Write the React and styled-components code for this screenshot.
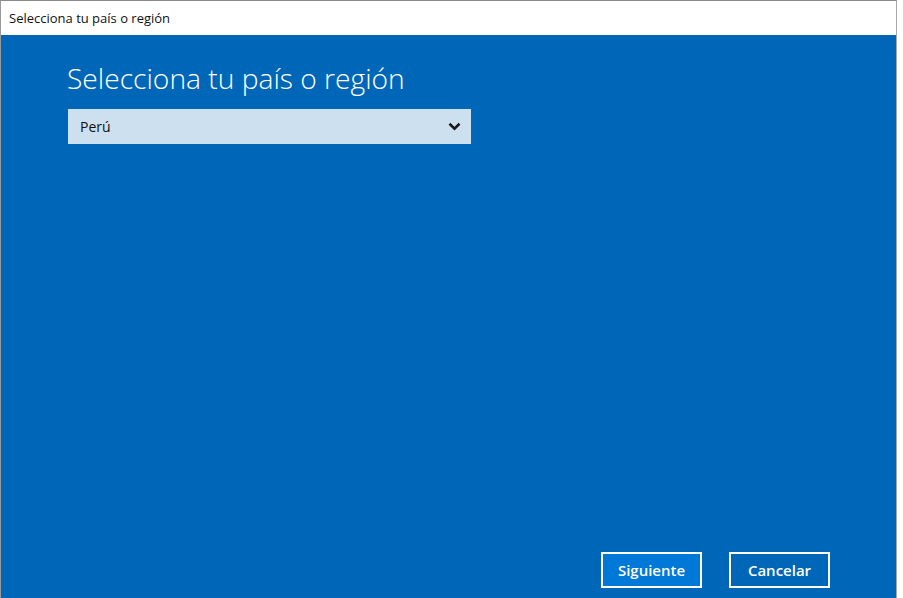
import React from "react";
import styled, { createGlobalStyle } from "styled-components";

const GlobalStyle = createGlobalStyle`
  html, body {
    margin: 0;
    padding: 0;
    background: #ffffff;
    font-family: "Open Sans", "Noto Sans", sans-serif;
  }
`;

function App() {
  return (
    <>
      <GlobalStyle />
      <Window>
        <TitleBar>Selecciona tu país o región</TitleBar>
        <Body>
          <Content>
            <Heading>Selecciona tu país o región</Heading>
            <Select>
              <span>Perú</span>
              <svg width="13" height="9" viewBox="0 0 13 9">
                <path d="M1.5 1.8 L6.5 6.6 L11.5 1.8" fill="none" stroke="#1a1a1a" strokeWidth="2.6" />
              </svg>
            </Select>
          </Content>
          <Footer>
            <Button primary>Siguiente</Button>
            <Button>Cancelar</Button>
          </Footer>
        </Body>
      </Window>
    </>
  );
}

const Window = styled.div`
  width: 897px;
  height: 598px;
  box-sizing: border-box;
  border-top: 1px solid #8a8a8a;
  border-left: 1px solid #9a9a9a;
  border-right: 1px solid #a8a8a8;
  display: flex;
  flex-direction: column;
  background: #0067b8;
`;

const TitleBar = styled.div`
  height: 34px;
  flex-shrink: 0;
  background: #ffffff;
  color: #111;
  font-size: 13px;
  line-height: 34px;
  padding-left: 8px;
`;

const Body = styled.div`
  flex: 1;
  display: flex;
  flex-direction: column;
  justify-content: space-between;
`;

const Content = styled.div`
  padding: 24px 0 0 66px;
`;

const Heading = styled.h1`
  margin: 0 0 12px 0;
  font-weight: 300;
  font-size: 28.2px;
  line-height: 38px;
  color: #ffffff;
`;

const Select = styled.div`
  width: 403px;
  height: 35px;
  margin-left: 1px;
  box-sizing: border-box;
  background: #cde0f0;
  display: flex;
  align-items: center;
  justify-content: space-between;
  padding: 0 10px 0 12px;
  font-size: 14px;
  color: #111;
`;

const Footer = styled.div`
  display: flex;
  justify-content: flex-end;
  gap: 27px;
  padding: 0 66px 10px 0;
`;

const Button = styled.div`
  width: 101px;
  height: 36px;
  box-sizing: border-box;
  border: 2px solid #ffffff;
  background: ${(p) => (p.primary ? "#0078d7" : "#0067b8")};
  color: #ffffff;
  font-size: 15px;
  font-weight: 600;
  display: flex;
  align-items: center;
  justify-content: center;
`;

export default App;
